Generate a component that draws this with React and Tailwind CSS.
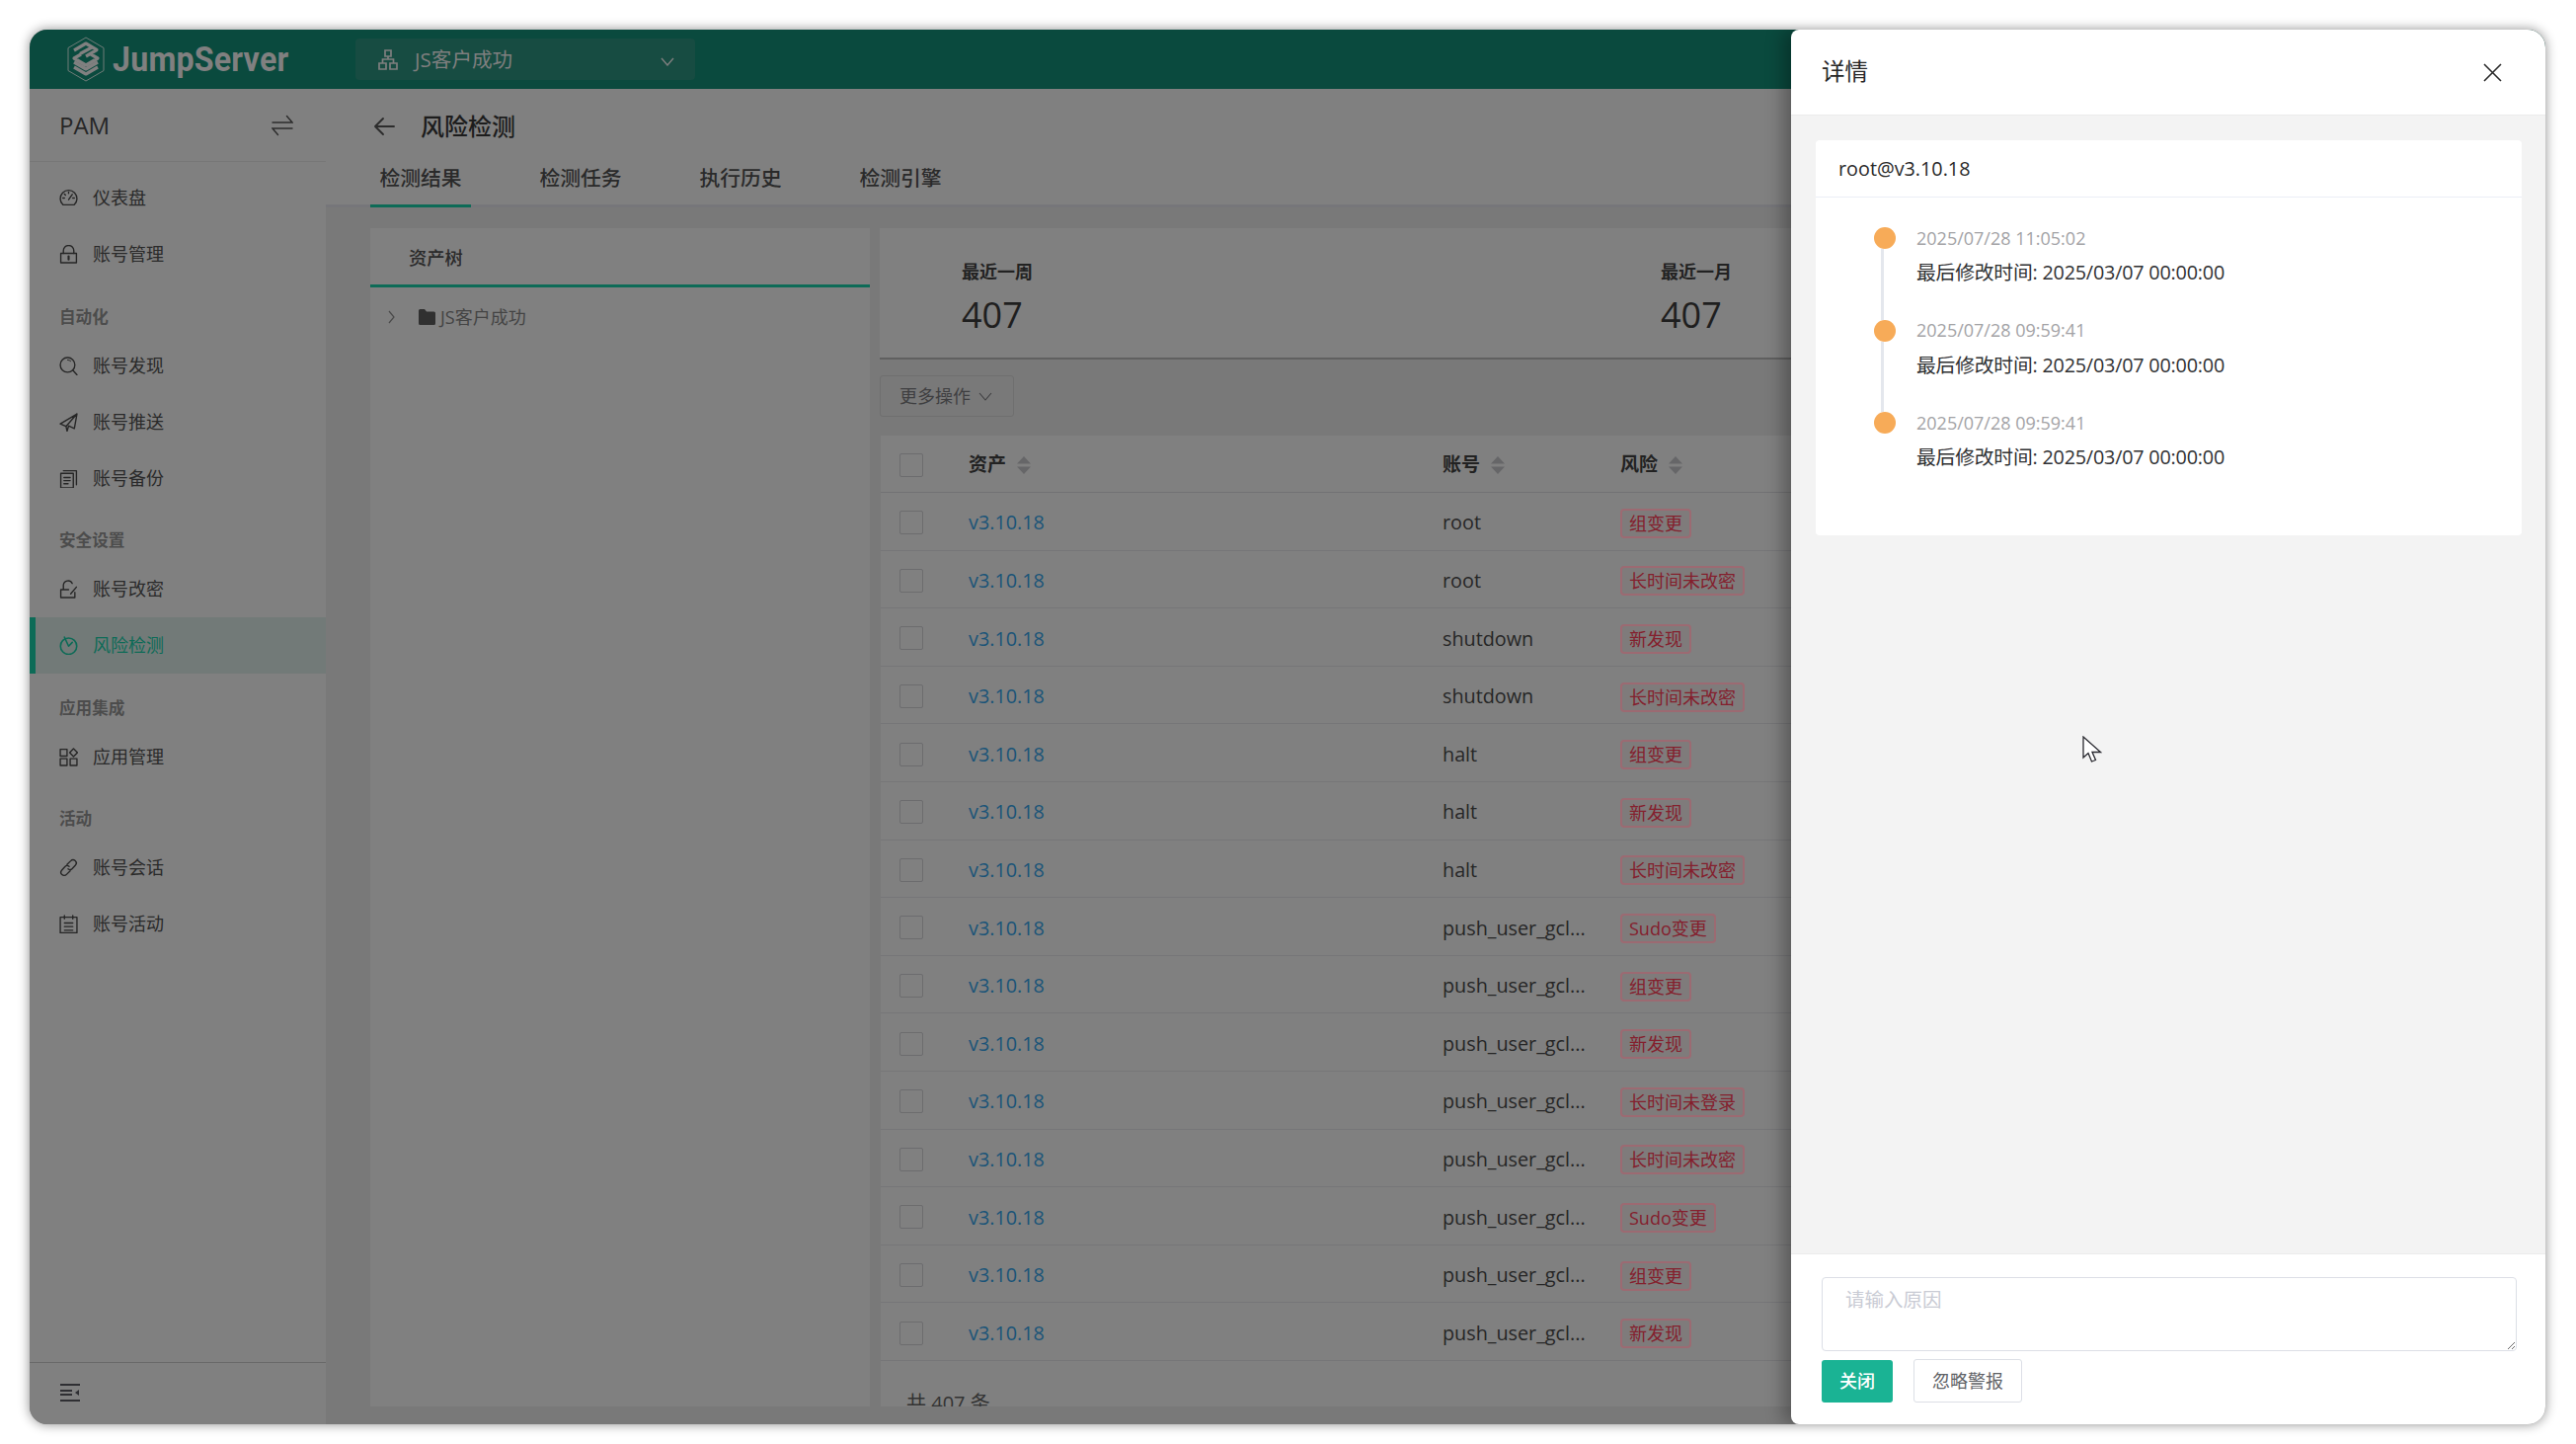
import React from "react";

const Svg = ({ children, c = "#262626", w = 19, h = 19, vb = "0 0 18 18", sw = 1.3 }) => (
  <svg width={w} height={h} viewBox={vb} fill="none" stroke={c} strokeWidth={sw} strokeLinecap="round" strokeLinejoin="round" className="shrink-0">{children}</svg>
);

const icons = {
  dash: <Svg><path d="M3.6 15.5A8 8 0 1 1 14.4 15.5Z" /><path d="M9 10.5 12.5 5.5M3.5 9H5M13 9h1.5M9 3.2v1.4M5 5.2l1 1" /></Svg>,
  lock: <Svg><rect x="1.5" y="8" width="15" height="9" /><path d="M4 8V5.5a5 5 0 0 1 10 0V8" /><path d="M9 11v3" strokeWidth="2" /></Svg>,
  search: <Svg><circle cx="8" cy="8" r="7" /><path d="M13 13l4 4.5" /><path d="M8 3.2a4.8 4.8 0 0 1 3 1.2" strokeWidth=".9" /></Svg>,
  send: <Svg><path d="M17 1 1 10.5l5.5 2.5L17 1ZM17 1l-2.5 14L9 12.5 7.5 17.5l-1-4.5" /></Svg>,
  backup: <Svg><rect x="1.5" y="4" width="12" height="14" /><path d="M4 1.5h12.5V15M4.5 8h6M4.5 11h6M4.5 14h4" /></Svg>,
  change: <Svg><path d="M1.5 9.5V17h13.5V12M1.5 9.5H9M4 9.5V5a4.5 4.5 0 0 1 8.5-1.5" /><path d="M16.5 7 11 13.5" /></Svg>,
  risk: <Svg c="#0d6b57" sw="1.5"><circle cx="9" cy="9.7" r="7.8" /><path d="M5 1 9 9.7 12.5 6" /></Svg>,
  apps: <Svg><rect x="1" y="1.5" width="6.5" height="6.5" /><rect x="1" y="10.5" width="6.5" height="6.5" /><rect x="10.5" y="10.5" width="6.5" height="6.5" /><path d="M13.7 1 17.5 4.7 13.7 8.5 10 4.7Z" /></Svg>,
  link: <Svg><path d="M7.5 6 11 2.5a3 3 0 0 1 4.5 4.2L12.5 10a3 3 0 0 1-4 .2" /><path d="M10.5 12 7 15.5a3 3 0 0 1-4.5-4.2L5.5 8a3 3 0 0 1 4-.2" /></Svg>,
  activity: <Svg><rect x="1" y="2.5" width="16" height="15" /><path d="M5 1v3M13 1v3M5 8h8M5 11.5h8M5 15h8" /></Svg>,
};

const Item = ({ icon, label, active }) => (
  <div className={`h-[57px] flex items-center pl-[30px] ${active ? "border-l-[6px] border-[#0d6b57] bg-[#727a78] !pl-[24px]" : ""}`}>
    {icons[icon]}
    <span className={`ml-[15px] text-[18px] ${active ? "text-[#0d6b57]" : "text-[#2a2a2a]"}`}>{label}</span>
  </div>
);

const Section = ({ label, h = "h-[56px]" }) => (
  <div className={`${h} flex items-end pl-[30px] pb-[10px] text-[16.6px] leading-[22px] font-bold text-[#4c4c4c]`}>{label}</div>
);

const Caret = () => (
  <svg width="14" height="18" viewBox="0 0 14 18" className="ml-[11px] shrink-0">
    <path d="M7 0 14 7.5H0ZM0 10.5h14L7 18Z" fill="#666668" />
  </svg>
);

const Checkbox = ({ cls = "" }) => <div className={`w-[24px] h-[24px] border border-[#6c6c6e] rounded-[2px] bg-[#808080] ${cls}`} />;

const rows = [
  ["root", "组变更"], ["root", "长时间未改密"], ["shutdown", "新发现"], ["shutdown", "长时间未改密"],
  ["halt", "组变更"], ["halt", "新发现"], ["halt", "长时间未改密"], ["push_user_gcl...", "Sudo变更"],
  ["push_user_gcl...", "组变更"], ["push_user_gcl...", "新发现"], ["push_user_gcl...", "长时间未登录"],
  ["push_user_gcl...", "长时间未改密"], ["push_user_gcl...", "Sudo变更"], ["push_user_gcl...", "组变更"], ["push_user_gcl...", "新发现"],
];

const times = ["2025/07/28 11:05:02", "2025/07/28 09:59:41", "2025/07/28 09:59:41"];

export default function App() {
  return (
    <div className="w-[2609px] h-[1462px] bg-white pt-[30px] pl-[30px] pr-[31px] pb-[20px] overflow-hidden relative" style={{ fontFamily: '"Open Sans","Noto Sans CJK SC",sans-serif' }}>
      <div className="w-full h-full relative rounded-[18px] overflow-hidden flex flex-col shadow-[0_0_12px_rgba(0,0,0,0.45)] bg-[#797979]">
        {/* Header */}
        <div className="h-[60px] shrink-0 bg-[#0a4a3e] flex items-center">
          <div className="w-[330px] shrink-0 flex items-center pl-[36px]">
            <svg width="42" height="46" viewBox="0 0 40 46" fill="none" className="shrink-0">
              <path d="M20 1 38 11.5V34.5L20 45 2 34.5V11.5Z" stroke="#6f7c78" strokeWidth="1" />
              <path d="M8 14 20 7l11 6.5-11 6.5M14 17.5l12-6.5M25 18l7 4-12 7-12-7 7-4M8 26l12 7 12-7M8 31l12 7 12-7" stroke="#808080" strokeWidth="3.2" strokeLinejoin="round" />
            </svg>
            <span className="ml-[6px] text-[35px] font-bold leading-none text-[#808080] tracking-[0.2px] scale-x-[0.92] origin-left" style={{ fontFamily: 'Roboto,sans-serif' }}>JumpServer</span>
          </div>
          <div className="w-[344px] h-[42px] bg-[#174c42] rounded-[4px] flex items-center pl-[23px]">
            <svg width="20" height="21" viewBox="0 0 20 21" fill="none" stroke="#7f7f7f" strokeWidth="1.7" className="shrink-0">
              <path d="M7 1h6v6H7ZM1 14h7v6H1ZM12 14h7v6h-7ZM10 7v3M4.5 14v-4h11v4" />
            </svg>
            <span className="ml-[17px] text-[20.6px] text-[#7f7f7f]">JS客户成功</span>
            <svg width="14" height="9" viewBox="0 0 14 9" fill="none" stroke="#7f7f7f" strokeWidth="1.4" className="ml-[150px] mt-[4px]"><path d="M1 1l6 7 6-7" /></svg>
          </div>
        </div>

        <div className="flex-1 flex min-h-0">
          {/* Sidebar */}
          <div className="w-[300px] shrink-0 bg-[#808080] flex flex-col">
            <div className="h-[74px] shrink-0 flex items-center justify-between pl-[30px] pr-[33px] border-b border-[#777777]">
              <span className="text-[24px] text-[#262626]">PAM</span>
              <svg width="22" height="22" viewBox="0 0 22 22" fill="none" stroke="#2c2c2c" strokeWidth="1.4" strokeLinecap="round"><path d="M1 8h20L15.5 1.5M21 14H1l5.5 6.5" /></svg>
            </div>
            <div className="h-[8px] shrink-0" />
            <Item icon="dash" label="仪表盘" />
            <Item icon="lock" label="账号管理" />
            <Section label="自动化" />
            <Item icon="search" label="账号发现" />
            <Item icon="send" label="账号推送" />
            <Item icon="backup" label="账号备份" />
            <Section label="安全设置" h="h-[55px]" />
            <Item icon="change" label="账号改密" />
            <Item icon="risk" label="风险检测" active />
            <Section label="应用集成" />
            <Item icon="apps" label="应用管理" />
            <Section label="活动" h="h-[55px]" />
            <Item icon="link" label="账号会话" />
            <Item icon="activity" label="账号活动" />
            <div className="mt-auto h-[63px] shrink-0 border-t border-[#696969] flex items-center pl-[31px] pb-[2px]">
              <svg width="20" height="18" viewBox="0 0 20 18" fill="none" stroke="#2f2f33" strokeWidth="2"><path d="M0 1h20M0 17h20M0 7h12M0 11h12" /><path d="M19 6v6l-4-3Z" fill="#2f2f33" stroke="none" /></svg>
            </div>
          </div>

          {/* Main */}
          <div className="flex-1 min-w-0 flex flex-col">
            <div className="h-[120px] shrink-0 bg-[#808080] border-b-[3px] border-[#76767a] flex flex-col">
              <div className="h-[75px] shrink-0 flex items-center pl-[48px]">
                <svg width="22" height="20" viewBox="0 0 22 20" fill="none" stroke="#2c2c2c" strokeWidth="1.9" strokeLinecap="round" strokeLinejoin="round"><path d="M21 10H2M10 2l-8 8 8 8" /></svg>
                <span className="ml-[26px] text-[24px] text-[#1c1c1c] font-medium">风险检测</span>
              </div>
              <div className="flex flex-1 pl-[45px]">
                {["检测结果", "检测任务", "执行历史", "检测引擎"].map((t, i) => (
                  <div key={t} className={`w-[102px] mr-[60px] flex items-start pt-[1px] justify-center text-[20.8px] leading-[28px] font-medium ${i === 0 ? "border-b-[3px] border-[#0d6b57] -mb-[3px] text-[#2a2a2a]" : "text-[#2a2a2a]"}`}>{t}</div>
                ))}
              </div>
            </div>

            <div className="flex-1 min-h-0 flex pl-[45px] pt-[21px] pb-[18px] gap-[10px] overflow-hidden">
              {/* Tree */}
              <div className="w-[506px] shrink-0 bg-[#808080]">
                <div className="h-[60px] border-b-[3px] border-[#0d6b57] flex items-center pl-[39px] pt-[2px] text-[18.3px] font-medium text-[#2a2a2a]">资产树</div>
                <div className="flex items-center h-[60px] pl-[18px]">
                  <svg width="7" height="14" viewBox="0 0 7 14" fill="none" stroke="#4a4a4a" strokeWidth="1.2"><path d="M1 1l5 6-5 6" /></svg>
                  <svg width="17" height="16" viewBox="0 0 17 16" fill="#303030" className="ml-[24px]"><path d="M0 1.5A1.5 1.5 0 0 1 1.5 0H6l2 2.5h7.5A1.5 1.5 0 0 1 17 4v10.5a1.5 1.5 0 0 1-1.5 1.5h-14A1.5 1.5 0 0 1 0 14.5Z" /></svg>
                  <span className="ml-[5px] text-[18px] text-[#444444]">JS客户成功</span>
                </div>
              </div>

              {/* Right column */}
              <div className="w-[1400px] shrink-0 flex flex-col overflow-hidden">
                <div className="h-[133px] shrink-0 bg-[#808080] border-b-2 border-[#606060] flex pl-[83px]">
                  {["最近一周", "最近一月"].map((t) => (
                    <div key={t} className="w-[708px] shrink-0 pt-[32px]">
                      <div className="text-[18px] leading-[24px] font-bold text-[#222222]">{t}</div>
                      <div className="text-[36px] leading-[48px] mt-[8px] text-[#1f1f1f]">407</div>
                    </div>
                  ))}
                </div>
                <div className="w-[136px] h-[42px] mt-[16px] shrink-0 border border-[#6f6f6f] rounded-[3px] bg-[#797979] flex items-center pl-[19px] text-[18px] text-[#3f3f41]">
                  更多操作
                  <svg width="14" height="9" viewBox="0 0 14 9" fill="none" stroke="#3f3f41" strokeWidth="1.1" className="ml-[8px]"><path d="M1 1l6 7 6-7" /></svg>
                </div>
                <div className="mt-[19px] ml-[1px] flex-1 min-h-0 bg-[#808080] overflow-hidden">
                  <div className="h-[58px] flex items-center pt-[2px] border-b border-[#727274] text-[19px] font-bold text-[#222222]">
                    <div className="w-[89px] pl-[19px] shrink-0"><Checkbox /></div>
                    <div className="w-[480px] shrink-0 flex items-center">资产<Caret /></div>
                    <div className="w-[180px] shrink-0 flex items-center">账号<Caret /></div>
                    <div className="flex items-center">风险<Caret /></div>
                  </div>
                  {rows.map(([acc, risk], i) => (
                    <div key={i} className="h-[58.6px] flex items-center pt-[3px] border-b border-[#767678] text-[19.8px]">
                      <div className="w-[89px] pl-[19px] shrink-0"><Checkbox /></div>
                      <div className="w-[480px] shrink-0 text-[#1a5478]">v3.10.18</div>
                      <div className="w-[180px] shrink-0 text-[#262626]">{acc}</div>
                      <div className="h-[30px] mt-[1px] px-[7px] flex items-center border-2 border-[#9c6a72] rounded-[4px] bg-[#7f7b7b] text-[18px] leading-none text-[#84202d]">{risk}</div>
                    </div>
                  ))}
                  <div className="pt-[28px] pl-[26px] text-[20px] text-[#333333]">共 407 条</div>
                </div>
              </div>
            </div>
          </div>
        </div>

        {/* Drawer */}
        <div className="absolute top-0 bottom-0 right-0 w-[764px] bg-white rounded-l-[8px] flex flex-col shadow-[-8px_0_18px_rgba(0,0,0,0.3)]">
          <div className="h-[87px] shrink-0 flex items-center justify-between pl-[31px] pr-[44px] border-b border-[#ebebeb]">
            <span className="text-[23.5px] text-[#262626]">详情</span>
            <svg width="19" height="19" viewBox="0 0 19 19" fill="none" stroke="#2a2a2a" strokeWidth="1.6"><path d="M1 1l17 17M18 1 1 18" /></svg>
          </div>
          <div className="flex-1 min-h-0 bg-[#f3f3f3] pt-[25px] pl-[25px] pr-[24px]">
            <div className="h-[400px] bg-white rounded-[4px] flex flex-col">
              <div className="h-[58px] shrink-0 flex items-center pl-[23px] pt-[1px] border-b border-[#ebeef5] text-[19.8px] text-[#2a2a2a]">root@v3.10.18</div>
              <div className="pt-[30px] pl-[59px]">
                {times.map((t, i) => (
                  <div key={i} className="h-[93.7px] flex">
                    <div className="w-[22px] shrink-0 flex flex-col">
                      <div className="w-[22px] h-[22px] rounded-full bg-[#f7ab58] shrink-0" />
                      {i < 2 && <div className="w-[3px] flex-1 ml-[7px] bg-[#e4e7ed]" />}
                    </div>
                    <div className="ml-[21px]">
                      <div className="h-[22px] flex items-center text-[18px] text-[#a3a3a6]">{t}</div>
                      <div className="mt-[11px] leading-[26px] text-[19.8px] text-[#303133] tracking-[-0.2px]">最后修改时间: 2025/03/07 00:00:00</div>
                    </div>
                  </div>
                ))}
              </div>
            </div>
          </div>
          <div className="h-[173px] shrink-0 border-t border-[#ebebeb] pl-[31px] pr-[29px] pt-[23px]">
            <textarea placeholder="请输入原因" className="block w-full h-[75px] rounded-[4px] border border-[#dcdfe6] px-[23px] pt-[7px] text-[19.5px] outline-none placeholder:text-[#c9cbd4]" />
            <div className="flex items-center mt-[8px] gap-[21px]">
              <div className="w-[72px] h-[43px] rounded-[3px] bg-[#1ab394] flex items-center justify-center text-[18px] font-medium text-white">关闭</div>
              <div className="w-[110px] h-[44px] rounded-[3px] border border-[#dcdfe6] flex items-center justify-center text-[18px] text-[#606266]">忽略警报</div>
            </div>
          </div>
        </div>

        {/* Pointer */}
        <svg width="20" height="29" viewBox="0 0 20 29" className="absolute left-[2079px] top-[715px]">
          <path d="M1 1V22L6 17.5 9.5 26 13.5 24.5 10 16.5H18.5Z" fill="#ffffff" stroke="#2a2a30" strokeWidth="1.3" strokeLinejoin="miter" />
        </svg>
      </div>
    </div>
  );
}
